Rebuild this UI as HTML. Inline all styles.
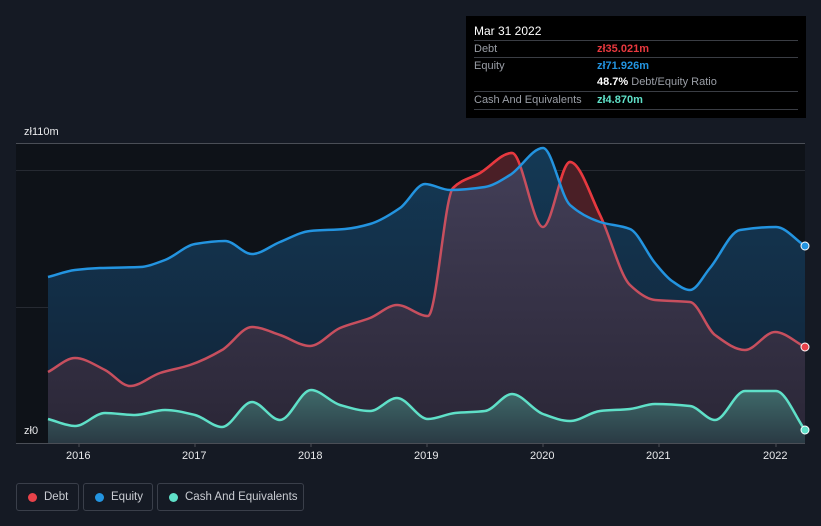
<!DOCTYPE html>
<html><head><meta charset="utf-8"><style>
*{margin:0;padding:0;box-sizing:border-box}
body{width:821px;height:526px;background:#151a24;font-family:"Liberation Sans",sans-serif;position:relative;overflow:hidden}
.tt{position:absolute;left:466px;top:16px;width:340px;height:102px;background:#000;color:#fff;font-size:11px}
.tt .r{position:absolute;left:8px;right:8px;border-top:1px solid #3a3d44;height:17px;line-height:17px}
.tt .l{color:#9a9ea6;position:absolute;left:0}
.tt .v{position:absolute;left:123px;font-weight:bold}
.lab{position:absolute;color:#e8e9eb;font-size:11px}
.leg{position:absolute;top:483px;height:28px;border:1px solid #3a3f4a;border-radius:3px;color:#c9ccd2;font-size:11.5px;line-height:26px;padding-left:27px;white-space:nowrap}
.leg i{position:absolute;left:11px;top:9px;width:9px;height:9px;border-radius:50%}
</style></head><body>
<svg width="821" height="526" style="position:absolute;left:0;top:0">
<defs>
<linearGradient id="ge" x1="0" y1="0" x2="0" y2="1"><stop offset="0" stop-color="#143955"/><stop offset="1" stop-color="#112236"/></linearGradient>
<linearGradient id="gd" x1="0" y1="0" x2="0" y2="1"><stop offset="0" stop-color="#433f58"/><stop offset="1" stop-color="#2a2636"/></linearGradient>
<linearGradient id="gc" x1="0" y1="0" x2="0" y2="1"><stop offset="0" stop-color="#3f6a6a"/><stop offset="1" stop-color="#2a3a44"/></linearGradient>
<clipPath id="above"><path id="ac"/></clipPath>
</defs>
<rect x="16" y="143" width="789" height="300" fill="#0e1218"/>
<line x1="16" y1="143.5" x2="805" y2="143.5" stroke="#4a4e56"/>
<line x1="16" y1="170.5" x2="805" y2="170.5" stroke="#262a32"/>
<line x1="16" y1="307.5" x2="805" y2="307.5" stroke="#262a32"/>
<path id="ef" fill="url(#ge)"/><path id="df" fill="url(#gd)"/>
<path id="df2" fill="#4a1f26" clip-path="url(#above)"/>
<path id="cf" fill="url(#gc)"/>
<path id="dl" fill="none" stroke="#c74f5e" stroke-width="2.5"/>
<path id="dl2" fill="none" stroke="#e8383e" stroke-width="2.5" clip-path="url(#above)"/>
<path id="el" fill="none" stroke="#2394e0" stroke-width="2.5"/>
<path id="cl" fill="none" stroke="#5fe0c8" stroke-width="2.5"/>
<line x1="16" y1="443.5" x2="805" y2="443.5" stroke="#4a4e56"/>
<g stroke="#4a4e56"><line x1="79" y1="443" x2="79" y2="447"/><line x1="195" y1="443" x2="195" y2="447"/><line x1="311" y1="443" x2="311" y2="447"/><line x1="427" y1="443" x2="427" y2="447"/><line x1="543" y1="443" x2="543" y2="447"/><line x1="659" y1="443" x2="659" y2="447"/><line x1="776" y1="443" x2="776" y2="447"/></g>
<circle cx="805" cy="246" r="4" fill="#2394e0" stroke="#fff" stroke-width="1"/>
<circle cx="805" cy="347" r="4" fill="#e8424a" stroke="#fff" stroke-width="1"/>
<circle cx="805" cy="430" r="4" fill="#5fe0c8" stroke="#fff" stroke-width="1"/>
</svg>
<div class="lab" style="left:24px;top:126px">zł110m</div>
<div class="lab" style="left:24px;top:425px">zł0</div>
<div class="lab" style="left:66px;top:450px">2016</div>
<div class="lab" style="left:182px;top:450px">2017</div>
<div class="lab" style="left:298px;top:450px">2018</div>
<div class="lab" style="left:414px;top:450px">2019</div>
<div class="lab" style="left:530px;top:450px">2020</div>
<div class="lab" style="left:646px;top:450px">2021</div>
<div class="lab" style="left:763px;top:450px">2022</div>
<div class="tt">
<div style="position:absolute;left:8px;top:8px;font-size:12px">Mar 31 2022</div>
<div class="r" style="top:24px"><span class="l">Debt</span><span class="v" style="color:#e8383e">zł35.021m</span></div>
<div class="r" style="top:41px"><span class="l">Equity</span><span class="v" style="color:#2394e0">zł71.926m</span></div>
<div class="r" style="top:58px;border-top:none"><span class="v">48.7% <span style="color:#9a9ea6;font-weight:normal">Debt/Equity Ratio</span></span></div>
<div class="r" style="top:75px"><span class="l">Cash And Equivalents</span><span class="v" style="color:#5fe0c8">zł4.870m</span></div>
<div class="r" style="top:93px;height:1px"></div>
</div>
<div class="leg" style="left:16px;width:63px"><i style="background:#e8424a"></i>Debt</div>
<div class="leg" style="left:83px;width:70px"><i style="background:#2394e0"></i>Equity</div>
<div class="leg" style="left:157px;width:147px"><i style="background:#5fe0c8"></i>Cash And Equivalents</div>
<script>
var E=[[48,277],[75,270],[100,268],[140,267],[165,260],[195,244],[225,241],[252,254],[280,242],[310,231],[345,229],[370,224],[400,208],[425,184],[450,190],[485,187],[510,175],[543,148],[570,205],[600,222],[630,229],[655,263],[672,281],[690,290],[710,268],[740,230],[776,227],[805,246]];
var D=[[48,372],[75,358],[105,370],[130,386],[160,373],[190,365],[222,350],[252,327],[280,335],[310,346],[340,328],[370,318],[397,305],[428,316],[453,188],[480,173],[512,153],[543,227],[570,162],[600,215],[630,285],[655,300],[690,302],[715,335],[745,350],[775,332],[805,347]];
var C=[[48,419],[75,426],[105,413],[135,415],[165,410],[195,415],[222,427],[252,402],[280,420],[311,390],[340,405],[370,411],[397,398],[428,419],[455,413],[485,411],[512,394],[543,414],[570,421],[600,411],[630,409],[655,404],[690,406],[715,420],[745,391],[776,391],[805,430]];
function sp(p){var n=p.length,d=[],m=[];for(var i=0;i<n-1;i++)d.push((p[i+1][1]-p[i][1])/(p[i+1][0]-p[i][0]));
m[0]=d[0];m[n-1]=d[n-2];for(i=1;i<n-1;i++){m[i]=(d[i-1]*d[i]<=0)?0:2/(1/d[i-1]+1/d[i]);}
var s="M"+p[0][0]+","+p[0][1];for(i=0;i<n-1;i++){var h=(p[i+1][0]-p[i][0])/3;s+="C"+(p[i][0]+h)+","+(p[i][1]+m[i]*h)+" "+(p[i+1][0]-h)+","+(p[i+1][1]-m[i+1]*h)+" "+p[i+1][0]+","+p[i+1][1];}return s;}
function g(id){return document.getElementById(id);}
function set(id,p){var s=sp(p);g(id+"l").setAttribute("d",s);g(id+"f").setAttribute("d",s+"L805,443L48,443Z");return s;}
var es=set("e",E);var ds=set("d",D);set("c",C);
g("dl2").setAttribute("d",ds);g("df2").setAttribute("d",ds+"L805,443L48,443Z");
g("ac").setAttribute("d",es+"L805,0L48,0Z");
</script>
</body></html>
